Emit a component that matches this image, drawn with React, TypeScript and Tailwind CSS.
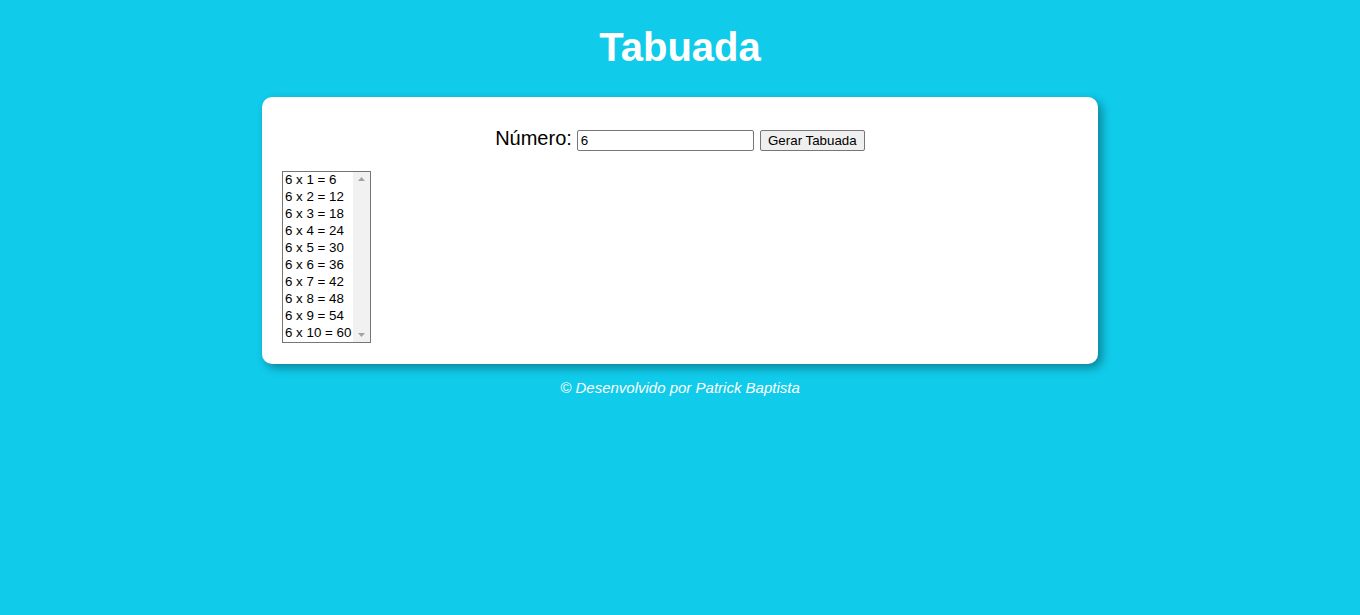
import { useState } from "react"

export default function App() {
  const [numero, setNumero] = useState("6")
  const [tabuada, setTabuada] = useState<string[]>(
    Array.from({ length: 10 }, (_, i) => `6 x ${i + 1} = ${6 * (i + 1)}`)
  )

  const gerar = () => {
    const n = Number(numero)
    if (!numero || isNaN(n)) return
    setTabuada(Array.from({ length: 10 }, (_, i) => `${n} x ${i + 1} = ${n * (i + 1)}`))
  }

  return (
    <div className="min-h-[615px] bg-[#10cbea] font-['Liberation_Sans',Arial,sans-serif] text-black">
      <h1 className="pt-[24px] text-center text-[40px] font-bold leading-[46px] text-white">Tabuada</h1>

      <div className="mx-auto mt-[27px] w-[836px] rounded-[10px] bg-white p-[20px] pb-[21px] shadow-[4px_4px_10px_rgba(0,0,0,0.35)]">
        <div className="mt-[10px] flex h-[23px] items-baseline justify-center">
          <span className="text-[20px] leading-[23px]">Número:</span>
          <input
            value={numero}
            onChange={(e) => setNumero(e.target.value)}
            className="ml-[5px] h-[21px] w-[177px] rounded-[2px] border border-[#767676] px-[3px] text-[13.33px] leading-[15px] outline-none"
          />
          <button
            onClick={gerar}
            className="ml-[6px] h-[21px] w-[105px] rounded-[2px] border border-[#767676] bg-[#efefef] text-[13.33px] leading-[15px]"
          >
            Gerar Tabuada
          </button>
        </div>

        <div className="mt-[21px] flex h-[172px] w-[89px] border border-[#767676] bg-white">
          <div className="flex-1 pl-[2px] pt-0">
            {tabuada.map((linha) => (
              <div key={linha} className="h-[17px] whitespace-nowrap text-[13.33px] leading-[16px]">
                {linha}
              </div>
            ))}
          </div>
          <div className="flex w-[17px] flex-col items-center justify-between bg-[#f1f1f1] py-[5px]">
            <svg width="7" height="4" viewBox="0 0 7 4">
              <path d="M3.5 0 L7 4 L0 4 Z" fill="#a3a3a3" />
            </svg>
            <svg width="7" height="4" viewBox="0 0 7 4">
              <path d="M0 0 L7 0 L3.5 4 Z" fill="#a3a3a3" />
            </svg>
          </div>
        </div>
      </div>

      <p className="mt-[15px] text-center text-[15px] italic leading-[17px] text-white">
        © Desenvolvido por Patrick Baptista
      </p>
    </div>
  )
}
